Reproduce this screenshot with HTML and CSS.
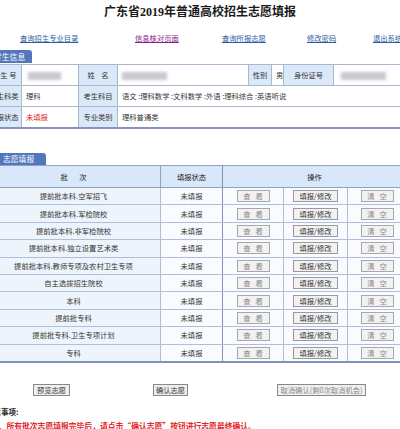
FILE: index.html
```html
<!DOCTYPE html>
<html lang="zh-CN">
<head>
<meta charset="utf-8">
<title>广东省2019年普通高校招生志愿填报</title>
<link rel="stylesheet" href="styles.css">
</head>
<body>
<div class="page">
  <h1 class="title">广东省2019年普通高校招生志愿填报</h1>
  <nav class="links">
    <a href="#">查询招生专业目录</a>
    <a href="#" class="visited">信息核对页面</a>
    <a href="#">查询所报志愿</a>
    <a href="#">修改密码</a>
    <a href="#">退出系统</a>
  </nav>

  <div class="tab tab-info">考生信息</div>
  <table class="info">
    <colgroup>
      <col class="w35"><col class="w57"><col class="w39"><col class="w131"><col class="w23"><col class="w12"><col class="w50"><col class="w73">
    </colgroup>
    <tr>
      <td class="lbl">考&nbsp;生&nbsp;号</td>
      <td class="val"><span class="blur b1"></span></td>
      <td class="lbl">姓&nbsp;&nbsp;&nbsp;&nbsp;名</td>
      <td class="val"><span class="blur b2"></span></td>
      <td class="lbl">性别</td>
      <td class="val">男</td>
      <td class="lbl">身份证号</td>
      <td class="val"><span class="blur b3"></span></td>
    </tr>
    <tr>
      <td class="lbl">考生科类</td>
      <td class="val">理科</td>
      <td class="lbl">考生科目</td>
      <td class="val" colspan="5">语文 :理科数学 :文科数学 :外语 :理科综合 :英语听说</td>
    </tr>
    <tr>
      <td class="lbl">填报状态</td>
      <td class="val red">未填报</td>
      <td class="lbl">专业类别</td>
      <td class="val" colspan="5">理科普通类</td>
    </tr>
  </table>

  <div class="tab tab-vol">志愿填报</div>
  <table class="vol">
    <colgroup>
      <col class="w174"><col class="w62"><col class="w61"><col class="w64"><col class="w59">
    </colgroup>
    <tr class="head">
      <th>批&nbsp;&nbsp;&nbsp;&nbsp;&nbsp;&nbsp;&nbsp;次</th>
      <th class="sep">填报状态</th>
      <th colspan="3">操作</th>
    </tr>
    <tr><td class="batch">提前批本科.空军招飞</td><td class="sep">未填报</td><td><span class="btn dim">查&nbsp;&nbsp;&nbsp;看</span></td><td><span class="btn">填报/修改</span></td><td><span class="btn dim">清&nbsp;&nbsp;&nbsp;空</span></td></tr>
    <tr><td class="batch">提前批本科.军检院校</td><td class="sep">未填报</td><td><span class="btn dim">查&nbsp;&nbsp;&nbsp;看</span></td><td><span class="btn">填报/修改</span></td><td><span class="btn dim">清&nbsp;&nbsp;&nbsp;空</span></td></tr>
    <tr><td class="batch">提前批本科.非军检院校</td><td class="sep">未填报</td><td><span class="btn dim">查&nbsp;&nbsp;&nbsp;看</span></td><td><span class="btn">填报/修改</span></td><td><span class="btn dim">清&nbsp;&nbsp;&nbsp;空</span></td></tr>
    <tr><td class="batch">提前批本科.独立设置艺术类</td><td class="sep">未填报</td><td><span class="btn dim">查&nbsp;&nbsp;&nbsp;看</span></td><td><span class="btn">填报/修改</span></td><td><span class="btn dim">清&nbsp;&nbsp;&nbsp;空</span></td></tr>
    <tr><td class="batch">提前批本科.教师专项及农村卫生专项</td><td class="sep">未填报</td><td><span class="btn dim">查&nbsp;&nbsp;&nbsp;看</span></td><td><span class="btn">填报/修改</span></td><td><span class="btn dim">清&nbsp;&nbsp;&nbsp;空</span></td></tr>
    <tr><td class="batch">自主选拔招生院校</td><td class="sep">未填报</td><td><span class="btn dim">查&nbsp;&nbsp;&nbsp;看</span></td><td><span class="btn">填报/修改</span></td><td><span class="btn dim">清&nbsp;&nbsp;&nbsp;空</span></td></tr>
    <tr><td class="batch">本科</td><td class="sep">未填报</td><td><span class="btn dim">查&nbsp;&nbsp;&nbsp;看</span></td><td><span class="btn">填报/修改</span></td><td><span class="btn dim">清&nbsp;&nbsp;&nbsp;空</span></td></tr>
    <tr><td class="batch">提前批专科</td><td class="sep">未填报</td><td><span class="btn dim">查&nbsp;&nbsp;&nbsp;看</span></td><td><span class="btn">填报/修改</span></td><td><span class="btn dim">清&nbsp;&nbsp;&nbsp;空</span></td></tr>
    <tr><td class="batch">提前批专科.卫生专项计划</td><td class="sep">未填报</td><td><span class="btn dim">查&nbsp;&nbsp;&nbsp;看</span></td><td><span class="btn">填报/修改</span></td><td><span class="btn dim">清&nbsp;&nbsp;&nbsp;空</span></td></tr>
    <tr><td class="batch">专科</td><td class="sep">未填报</td><td><span class="btn dim">查&nbsp;&nbsp;&nbsp;看</span></td><td><span class="btn">填报/修改</span></td><td><span class="btn dim">清&nbsp;&nbsp;&nbsp;空</span></td></tr>
  </table>

  <div class="actions">
    <span class="btn big b-preview">预览志愿</span>
    <span class="btn big b-confirm">确认志愿</span>
    <span class="btn big dim b-cancel">取消确认(剩0次取消机会)</span>
  </div>

  <div class="notes">
    <div class="notes-title">注意事项:</div>
    <div class="notes-line">1、所有批次志愿填报完毕后，请点击“确认志愿”按钮进行志愿最终确认。</div>
  </div>
</div>
</body>
</html>
```
FILE: styles.css
```css
html, body {
  margin: 0;
  padding: 0;
  background: #ffffff;
}
body {
  width: 400px;
  height: 429px;
  overflow: hidden;
  font-family: "Noto Sans CJK SC", "Noto Sans", sans-serif;
  font-size: 7.3px;
  color: #333333;
}
.page {
  width: 420px;
  margin-left: -14px;
}
.title {
  margin: 0;
  padding: 5px 0 0 8px;
  height: 14px;
  text-align: center;
  font-family: "Liberation Serif", "Noto Sans CJK SC", serif;
  font-weight: bold;
  font-size: 12px;
  line-height: 14px;
  color: #1a1a1a;
}
.links {
  margin-top: 14px;
  padding-left: 34px;
  display: grid;
  grid-template-columns: 115px 87px 85px 66px auto;
  font-size: 7.3px;
  line-height: 10px;
  height: 10px;
}
.links a {
  color: #2a5d9f;
  text-decoration: underline;
  white-space: nowrap;
}
.links a.visited {
  color: #8a1f8a;
}
.tab {
  display: inline-block;
  background: #5277bd;
  color: #ffffff;
  font-size: 7.8px;
  border-top-right-radius: 3px;
  white-space: nowrap;
}
.tab-info {
  margin-top: 7px;
  height: 13px;
  line-height: 13px;
  padding: 0 7px 0 8px;
  vertical-align: top;
}
.tab-vol {
  margin-top: 24px;
  height: 12px;
  line-height: 12px;
  padding: 0 12px 0 17px;
  vertical-align: top;
}
table {
  border-collapse: collapse;
  table-layout: fixed;
  width: 420px;
}
.w35 { width: 35px; }
.w57 { width: 57px; }
.w39 { width: 39px; }
.w131 { width: 131px; }
.w23 { width: 23px; }
.w12 { width: 12px; }
.w50 { width: 50px; }
.w73 { width: 73px; }
.w174 { width: 174px; }
.w62 { width: 62px; }
.w61 { width: 61px; }
.w64 { width: 64px; }
.w59 { width: 59px; }

.info {
  margin-top: 1px;
  border-top: 1px solid #8396b8;
  border-bottom: 2px solid #8396b8;
}
.info td {
  height: 20px;
  padding: 0;
  border: 1px solid #a8b8d2;
  white-space: nowrap;
  overflow: hidden;
  font-size: 7.3px;
}
.info .lbl {
  background: #dbe8f8;
  text-align: center;
  color: #333;
}
.info .val {
  background: #ffffff;
  padding-left: 4px;
  color: #333;
}
.info .red {
  color: #e02424;
}
.blur {
  display: inline-block;
  height: 8px;
  background: #c9c9cf;
  filter: blur(1.5px);
  vertical-align: middle;
}
.b1 { width: 33px; margin-left: 2px; }
.b2 { width: 45px; }
.b3 { width: 45px; margin-left: 3px; }

.vol {
  border-bottom: 2px solid #7f93b6;
}
.vol th {
  height: 21px;
  padding: 0;
  background: #d8e7f9;
  border: 1px solid #8ea2c2;
  font-weight: normal;
  color: #222;
  font-size: 7.3px;
}
.vol td {
  height: 16.4px;
  padding: 0;
  text-align: center;
  border: 1px solid #aebfd8;
  background: #f9fbfe;
  white-space: nowrap;
  color: #333;
}
.vol td.batch {
  background: #eef4fc;
}
.vol .sep {
  border-right: 1px solid #7f93b6;
}
.btn {
  display: inline-block;
  box-sizing: border-box;
  height: 12px;
  line-height: 10px;
  border: 1px solid #9a9a9a;
  background: #f2f2f2;
  color: #333;
  font-size: 7.3px;
  text-align: center;
  vertical-align: middle;
  white-space: nowrap;
}
.vol .btn {
  width: 33px;
}
.vol td:nth-child(4) .btn {
  width: 45px;
}
.btn.dim {
  color: #8a8a8a;
  border-color: #a8a8a8;
}
.actions {
  margin-top: 21px;
  padding-left: 47px;
  display: flex;
  height: 12px;
}
.btn.big {
  height: 12px;
  background: #efefef;
  border-color: #888;
}
.b-preview { width: 37px; }
.b-confirm { width: 35px; margin-left: 83px; }
.b-cancel { width: 89px; margin-left: 89px; }
.notes {
  margin-top: 11px;
}
.notes-title {
  font-weight: bold;
  color: #222;
  font-size: 7.5px;
  line-height: 10px;
}
.notes-line {
  margin-top: 4px;
  padding-left: 8px;
  color: #e0262a;
  font-weight: bold;
  font-size: 7.8px;
  line-height: 10px;
  white-space: nowrap;
}
```
